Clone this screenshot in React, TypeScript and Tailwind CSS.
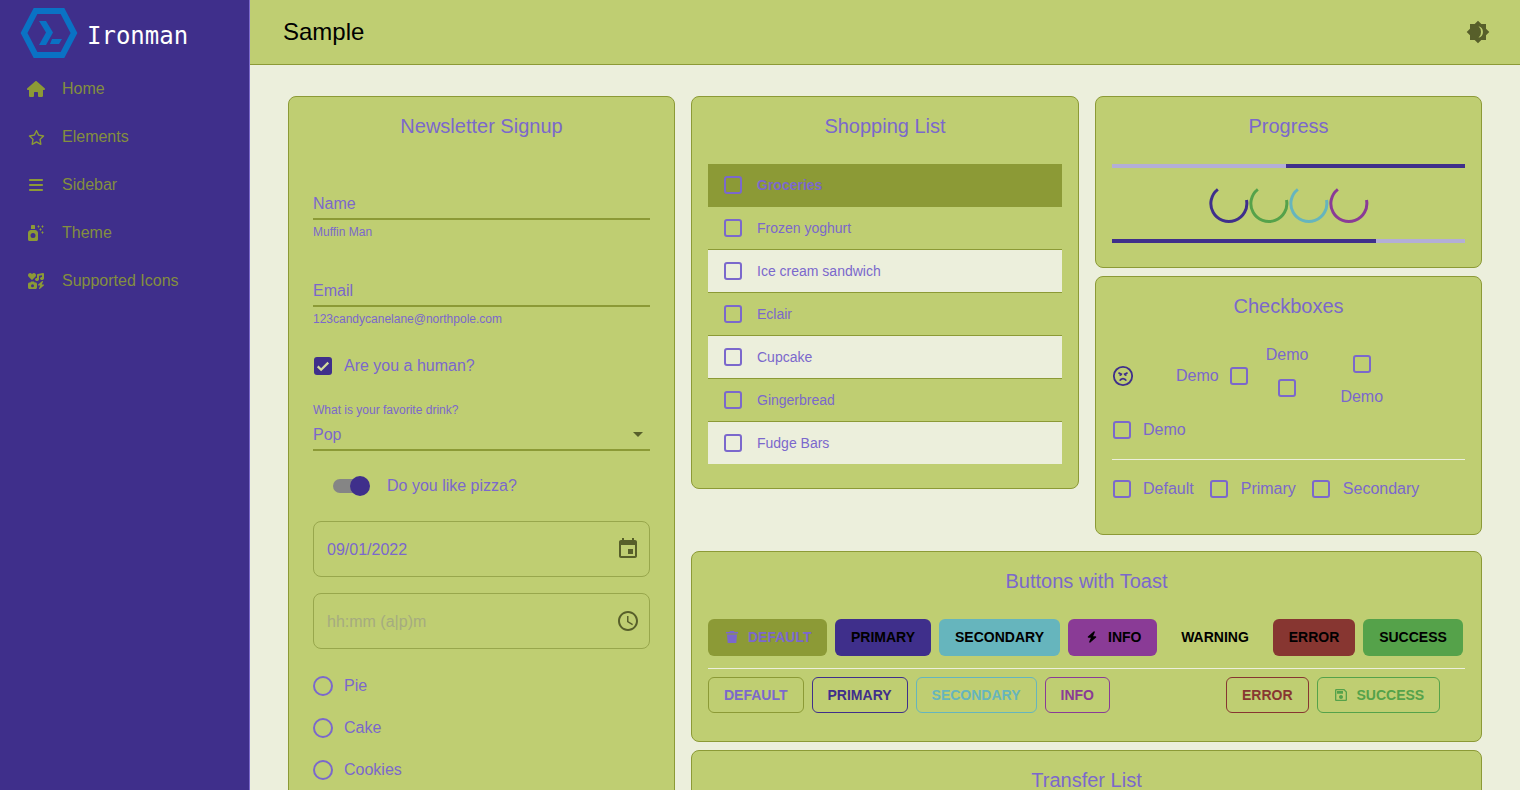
import React from 'react';
import { FaBars, FaBolt, FaHouse, FaIcons, FaRegStar, FaSprayCanSparkles } from 'react-icons/fa6';

const Mui = ({ d, className }: { d: string; className?: string }) => (
  <svg viewBox="0 0 24 24" fill="currentColor" fillRule="evenodd" className={className}>
    <path d={d} />
  </svg>
);

const paths = {
  brightness: 'M20 8.69V4h-4.69L12 .69 8.69 4H4v4.69L.69 12 4 15.31V20h4.69L12 23.31 15.31 20H20v-4.69L23.31 12 20 8.69zM12.500 6.200A6 6 0 0 1 12.500 17.800A7 7 0 0 0 15 12A7 7 0 0 0 12.500 6.200z',
  calendar: 'M17 12h-5v5h5v-5zM16 1v2H8V1H6v2H5c-1.11 0-1.99.9-1.99 2L3 19c0 1.1.89 2 2 2h14c1.1 0 2-.9 2-2V5c0-1.1-.9-2-2-2h-1V1h-2zm3 18H5V8h14v11z',
  clock: 'M11.99 2C6.47 2 2 6.48 2 12s4.47 10 9.99 10C17.52 22 22 17.52 22 12S17.52 2 11.99 2zM12 20c-4.42 0-8-3.58-8-8s3.58-8 8-8 8 3.58 8 8-3.58 8-8 8zM12.5 7H11v6l5.25 3.15.75-1.23-4.5-2.67z',
  save: 'M17 3H5c-1.11 0-2 .9-2 2v14c0 1.1.89 2 2 2h14c1.1 0 2-.9 2-2V7l-4-4zm2 16H5V5h11.17L19 7.83V19zm-7-7c-1.66 0-3 1.34-3 3s1.34 3 3 3 3-1.34 3-3-1.34-3-3-3zM6 6h9v4H6z',
};

const navItems = ['Home', 'Elements', 'Sidebar', 'Theme', 'Supported Icons'];

const Box = () => <span className="block w-[18px] h-[18px] shrink-0 border-2 border-[#7b68cc] rounded-[3px]" />;

const Card = ({ title, className, children }: { title: string; className?: string; children?: React.ReactNode }) => (
  <div className={`border border-[#8c9a36] rounded-[8px] bg-[#bfce72] overflow-hidden ${className}`}>
    <div className="pt-4 text-center text-[20px] leading-[26px] text-[#7b68cc]">{title}</div>
    {children}
  </div>
);

const Field = ({ label, helper, className }: { label: string; helper: string; className?: string }) => (
  <div className={className}>
    <div className="h-[27px] border-b-2 border-[#8c9a36] text-base leading-[22px] text-[#7b68cc]">{label}</div>
    <div className="mt-[5px] text-xs leading-[14px] text-[#7b68cc]">{helper}</div>
  </div>
);

const Radio = ({ label }: { label: string }) => (
  <div className="h-[42px] flex items-center gap-[11px] text-base text-[#7b68cc]">
    <span className="block w-5 h-5 rounded-full border-2 border-[#7b68cc]" />
    {label}
  </div>
);

const shopping = ['Frozen yoghurt', 'Ice cream sandwich', 'Eclair', 'Cupcake', 'Gingerbread', 'Fudge Bars'];

const Spinner = ({ color }: { color: string }) => (
  <svg viewBox="0.5 0.5 40 40" className={`w-10 h-10 ${color}`} fill="none">
    <path d="M9.35 5.820A18 18 0 1 0 38 16.500" stroke="currentColor" strokeWidth="3" />
  </svg>
);

const SolidButton = ({ className, children }: { className: string; children: React.ReactNode }) => (
  <button className={`h-[37px] pb-px rounded-[6px] flex items-center text-sm font-bold ${className}`}>
    {children}
  </button>
);

const OutlineButton = ({ color, icon, label }: { color: string; icon?: string; label: string }) => (
  <button className={`h-9 px-[15px] rounded-[6px] border flex items-center gap-2 text-sm font-bold ${color}`}>
    {icon && <Mui d={icon} className="w-4 h-4" />}
    {label}
  </button>
);

export default function App() {
  return (
    <div className="h-[790px] flex overflow-hidden bg-[#ecefdc] font-['Liberation_Sans',Arial,sans-serif]">
      <aside className="w-[250px] shrink-0 bg-[#3f2f8b] border-r border-[#7b68cc]">
        <div className="h-[65px] pl-5 pt-2 flex items-start gap-[9px] text-white">
          <svg viewBox="0 0 58 50" className="w-[58px] h-[50px]" fill="none">
            <path d="M15.5 3h27L54 25 42.5 47h-27L4 25z" stroke="#0a72c4" strokeWidth="6" />
            <path d="M19 13h7l7 11.500-7 12.500h-7l7-12.500z" fill="#0a72c4" />
            <path d="M32 31h10l-3 5h-9z" fill="#0a72c4" />
          </svg>
          <span className="mt-3 font-['DejaVu_Sans_Mono',monospace] text-2xl">Ironman</span>
        </div>
        <nav>
          {navItems.map((name, i) => (
            <div key={name} className="h-12 pl-6 flex items-center gap-[14px] text-base text-[#8c9a36]">
              <span className="w-6 flex justify-center">
                {i === 0 && <FaHouse className="w-[18px] h-4" />}
                {i === 1 && <FaRegStar className="w-[17px] h-[15px]" />}
                {i === 2 && <FaBars className="w-[14px] h-4" />}
                {i === 3 && <FaSprayCanSparkles className="w-4 h-4" />}
                {i === 4 && <FaIcons className="w-4 h-4" />}
              </span>
              <span className="opacity-90">{name}</span>
            </div>
          ))}
        </nav>
      </aside>

      <div className="flex-1 min-w-0">
        <header className="h-[65px] pl-[33px] pr-[30px] flex items-center justify-between bg-[#bfce72] border-b border-[#8c9a36]">
          <span className="text-2xl text-black">Sample</span>
          <Mui d={paths.brightness} className="w-6 h-6 text-[#575f2a]" />
        </header>

        <main className="pt-[31px] px-[38px] flex gap-4">
          <Card title="Newsletter Signup" className="w-[387px] h-[760px] shrink-0">
            <div className="px-6">
              <Field label="Name" helper="Muffin Man" className="mt-[54px]" />
              <Field label="Email" helper="123candycanelane@northpole.com" className="mt-[41px]" />
              <div className="mt-[28px] h-6 pl-px flex items-center gap-3 text-base text-[#7b68cc]">
                <span className="w-[18px] h-[18px] rounded-[3px] bg-[#3f2f8b] text-[#d5dc9c] flex items-center justify-center">
                  <svg viewBox="0 0 24 24" className="w-[18px] h-[18px]" fill="none" stroke="currentColor" strokeWidth="3">
                    <path d="M5 12.500l4.500 4.500L19 7.500" />
                  </svg>
                </span>
                Are you a human?
              </div>
              <div className="mt-[25px] text-xs leading-[14px] text-[#7b68cc]">What is your favorite drink?</div>
              <div className="mt-[3px] h-[31px] flex items-center justify-between border-b-2 border-[#8c9a36] text-base text-[#7b68cc]">
                Pop
                <span className="mr-[7px] border-x-[5px] border-t-[5px] border-x-transparent border-t-[#575f2a]" />
              </div>
              <div className="mt-[23px] h-6 pl-5 flex items-center gap-5 text-base text-[#7b68cc]">
                <span className="relative block w-[34px] h-[14px] rounded-full bg-[#858585]">
                  <span className="absolute -right-[3px] -top-[3px] w-5 h-5 rounded-full bg-[#3f2f8b]" />
                </span>
                Do you like pizza?
              </div>
              <div className="mt-[23px] h-14 pl-[13px] pr-[9px] flex items-center justify-between rounded-[8px] border border-[#98a74c] text-base text-[#7b68cc]">
                <span className="mt-[2px]">09/01/2022</span>
                <Mui d={paths.calendar} className="w-6 h-6 text-[#575f2a]" />
              </div>
              <div className="mt-4 h-14 pl-[13px] pr-[9px] flex items-center justify-between rounded-[8px] border border-[#98a74c] text-base text-[#a5ab80]">
                <span className="mt-[2px]">hh:mm (a|p)m</span>
                <Mui d={paths.clock} className="w-6 h-6 text-[#575f2a]" />
              </div>
              <div className="mt-4">
                <Radio label="Pie" />
                <Radio label="Cake" />
                <Radio label="Cookies" />
              </div>
            </div>
          </Card>

          <div className="flex-1 min-w-0">
            <div className="flex gap-4">
              <Card title="Shopping List" className="w-[388px] h-[393px] shrink-0">
                <div className="mt-[25px] px-4">
                  <div className="h-[43px] pl-4 flex items-center gap-[15px] bg-[#8c9a36] border-b border-transparent text-sm font-bold text-[#7b68cc]">
                    <Box />
                    Groceries
                  </div>
                  {shopping.map((item, i) => (
                    <div
                      key={item}
                      className={`pl-4 flex items-center gap-[15px] text-sm text-[#7b68cc] ${i % 2 === 1 ? 'bg-[#ecefdc]' : ''} ${i < 5 ? 'h-[43px] border-b border-[#8c9a36]' : 'h-[42px]'}`}
                    >
                      <Box />
                      {item}
                    </div>
                  ))}
                </div>
              </Card>

              <div className="flex-1 min-w-0">
                <Card title="Progress" className="h-[172px]">
                  <div className="mt-[25px] mx-4 h-1 flex bg-[#b3aed6]">
                    <div className="ml-[174px] flex-1 bg-[#3f2f8b]" />
                  </div>
                  <div className="mt-4 flex justify-center">
                    <Spinner color="text-[#3f2f8b]" />
                    <Spinner color="text-[#55a24a]" />
                    <Spinner color="text-[#66b5bd]" />
                    <Spinner color="text-[#8a3b96]" />
                  </div>
                  <div className="mt-[15px] mx-4 h-1 flex bg-[#b3aed6]">
                    <div className="w-[264px] bg-[#3f2f8b]" />
                  </div>
                </Card>

                <Card title="Checkboxes" className="mt-2 h-[259px]">
                  <div className="px-4 text-base text-[#7b68cc]">
                    <div className="mt-[15px] h-[84px] flex items-center">
                      <svg viewBox="0 0 24 24" className="w-[22px] h-[22px] text-[#3f2f8b]" fill="none" stroke="currentColor" strokeWidth="2">
                        <circle cx="12" cy="12" r="10" />
                        <path d="M7 8.500l4 2M17 8.500l-4 2M8.500 17c.8-1.500 2-2.200 3.500-2.200s2.700.7 3.500 2.200" />
                        <circle cx="9" cy="11" r="1" fill="currentColor" stroke="none" />
                        <circle cx="15" cy="11" r="1" fill="currentColor" stroke="none" />
                      </svg>
                      <span className="ml-[42px]">Demo</span>
                      <span className="ml-[11px]"><Box /></span>
                      <div className="ml-[18px] self-start mt-[9px] flex flex-col items-center">
                        <span>Demo</span>
                        <span className="mt-3"><Box /></span>
                      </div>
                      <div className="ml-[32px] self-start mt-[21px] flex flex-col items-center">
                        <Box />
                        <span className="mt-3">Demo</span>
                      </div>
                    </div>
                    <div className="h-6 pl-px flex items-center gap-3"><Box />Demo</div>
                    <div className="mt-[17px] h-px bg-[#ecefdc]" />
                    <div className="mt-[17px] h-6 flex items-center gap-3 pl-px">
                      <Box />Default
                      <span className="ml-[4px]"><Box /></span>
                      <span className="ml-px">Primary</span>
                      <span className="ml-[4px]"><Box /></span>
                      <span className="ml-px">Secondary</span>
                    </div>
                  </div>
                </Card>
              </div>
            </div>

            <Card title="Buttons with Toast" className="mt-4 h-[191px]">
              <div className="px-4">
                <div className="mt-[25px] flex gap-2">
                  <SolidButton className="w-[119px] pl-[18px] gap-[10px] bg-[#8c9a36] text-[#7b68cc]">
                    <svg viewBox="0 0 12 12" className="w-3 h-3" fill="currentColor">
                      <path d="M4 0h4l.5 1H12v1.500H0V1h3.500zM1 3.500h10L10.300 12H1.700z" />
                    </svg>
                    DEFAULT
                  </SolidButton>
                  <SolidButton className="w-[96px] justify-center bg-[#3f2f8b] text-black">PRIMARY</SolidButton>
                  <SolidButton className="w-[121px] justify-center bg-[#66b5bd] text-black">SECONDARY</SolidButton>
                  <SolidButton className="w-[89px] pl-[19px] gap-[11px] bg-[#8a3b96] text-black">
                    <FaBolt className="w-[10px] h-3" />
                    INFO
                  </SolidButton>
                  <SolidButton className="w-[100px] justify-center text-black">WARNING</SolidButton>
                  <SolidButton className="w-[82px] justify-center bg-[#873631] text-black">ERROR</SolidButton>
                  <SolidButton className="w-[100px] justify-center bg-[#55a24a] text-black">SUCCESS</SolidButton>
                </div>
                <div className="mt-3 h-px bg-[#ecefdc]" />
                <div className="mt-2 flex gap-2">
                  <OutlineButton color="border-[#8c9a36] text-[#7b68cc]" label="DEFAULT" />
                  <OutlineButton color="border-[#3f2f8b] text-[#3f2f8b]" label="PRIMARY" />
                  <OutlineButton color="border-[#66b5bd] text-[#66b5bd]" label="SECONDARY" />
                  <OutlineButton color="border-[#8a3b96] text-[#8a3b96]" label="INFO" />
                  <span className="w-[100px]" />
                  <OutlineButton color="border-[#873631] text-[#873631]" label="ERROR" />
                  <OutlineButton color="border-[#55a24a] text-[#55a24a]" icon={paths.save} label="SUCCESS" />
                </div>
              </div>
            </Card>

            <Card title="Transfer List" className="mt-2 h-[200px]" />
          </div>
        </main>
      </div>
    </div>
  );
}
